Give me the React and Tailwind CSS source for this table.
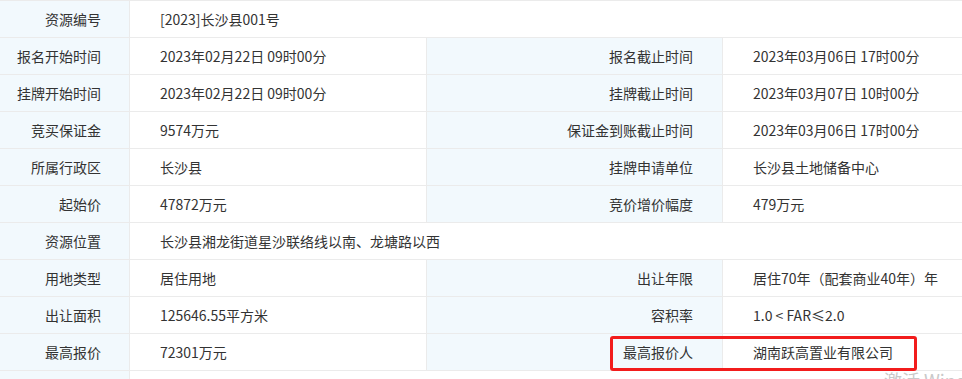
import React from "react";

const rows = [
  { full: true, label: "资源编号", value: "[2023]长沙县001号" },
  { label: "报名开始时间", value: "2023年02月22日 09时00分", label2: "报名截止时间", value2: "2023年03月06日 17时00分" },
  { label: "挂牌开始时间", value: "2023年02月22日 09时00分", label2: "挂牌截止时间", value2: "2023年03月07日 10时00分" },
  { label: "竞买保证金", value: "9574万元", label2: "保证金到账截止时间", value2: "2023年03月06日 17时00分" },
  { label: "所属行政区", value: "长沙县", label2: "挂牌申请单位", value2: "长沙县土地储备中心" },
  { label: "起始价", value: "47872万元", label2: "竞价增价幅度", value2: "479万元" },
  { full: true, label: "资源位置", value: "长沙县湘龙街道星沙联络线以南、龙塘路以西" },
  { label: "用地类型", value: "居住用地", label2: "出让年限", value2: "居住70年（配套商业40年）年" },
  { label: "出让面积", value: "125646.55平方米", label2: "容积率", value2: "1.0 < FAR≤2.0" },
  { label: "最高报价", value: "72301万元", label2: "最高报价人", value2: "湖南跃高置业有限公司", mark: true },
  { full: true, label: "", value: "" },
];

function Row({ row }) {
  return (
    <div className="flex h-[37px] border-b border-[#ebebeb]">
      <div className="w-[130px] shrink-0 flex items-center justify-end pr-[28px] bg-[#f2f9fd] border-r border-[#ebebeb]">
        {row.label}
      </div>
      {row.full ? (
        <div className="flex-1 flex items-center pl-[30px] bg-white">{row.value}</div>
      ) : (
        <>
          <div className="w-[297px] shrink-0 flex items-center pl-[30px] bg-white border-r border-[#ebebeb]">
            {row.value}
          </div>
          <div className="w-[296px] shrink-0 flex items-center justify-end pr-[29px] bg-[#f2f9fd] border-r border-[#ebebeb]">
            {row.label2}
          </div>
          <div className="flex-1 flex items-center pl-[30px] bg-white">{row.value2}</div>
        </>
      )}
    </div>
  );
}

export default function App() {
  return (
    <div
      className="relative w-[962px] h-[379px] overflow-hidden bg-white text-[14px] text-[#333333]"
      style={{ fontFamily: '"Noto Sans CJK SC", "Microsoft YaHei", sans-serif' }}
    >
      <div className="border-t border-[#ebebeb]">
        {rows.map((row, i) => (
          <Row key={i} row={row} />
        ))}
      </div>

      {/* highlight around highest bidder */}
      <div className="absolute left-[610px] top-[336px] w-[307px] h-[35px] border-[3px] border-[#f21c1c] rounded-[3px] pointer-events-none" />

      {/* OS watermark, cut off at the bottom */}
      <div className="absolute left-[884px] top-[371px] text-[18px] leading-none text-[#c9c9c9] whitespace-nowrap">
        激活 Windows
      </div>
    </div>
  );
}
